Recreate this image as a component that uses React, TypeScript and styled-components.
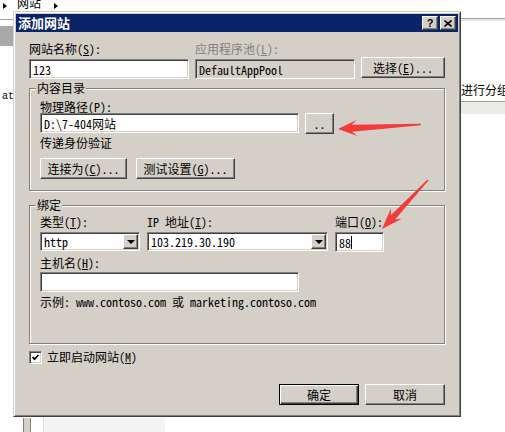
import React, { FC } from 'react';
import styled, { createGlobalStyle, css } from 'styled-components';

const FONT = `"Noto Sans Mono CJK SC", "Liberation Mono", "Noto Sans CJK SC", monospace`;
const FACE = '#d4d0c8';

const GlobalStyle = createGlobalStyle`
  html, body {
    margin: 0;
    padding: 0;
    background: #fff;
  }
  body {
    font-family: ${FONT};
    font-size: 12px;
    color: #000;
    overflow: hidden;
  }
`;

const sunken = css`
  box-sizing: border-box;
  border: 1px solid;
  border-color: #808080 #fff #fff #808080;
  box-shadow: inset 1px 1px #404040, inset -1px -1px ${FACE};
`;

const raised = css`
  box-sizing: border-box;
  border: 1px solid;
  border-color: #fff #404040 #404040 #fff;
  box-shadow: inset -1px -1px #808080, inset 1px 1px ${FACE};
  background: ${FACE};
`;

const Page = styled.div`
  position: relative;
  width: 505px;
  height: 432px;
  overflow: hidden;
  background: #fff;
`;

/* ---- the console behind the dialog ---- */

const Backdrop = styled.div`
  display: flex;
  flex-direction: column;
  height: 100%;
`;

const Crumbs = styled.div`
  height: 18px;
  display: flex;
  align-items: flex-start;
  padding-left: 3px;
`;

const CrumbArrow = styled.span<{ $gap: number }>`
  width: 0;
  height: 0;
  margin: 3px 0 0 ${(p) => p.$gap}px;
  border-left: 4px solid #000;
  border-top: 3px solid transparent;
  border-bottom: 3px solid transparent;
`;

const CrumbText = styled.span`
  margin: -4px 0 0 10px;
  line-height: 14px;
`;

const Panes = styled.div`
  flex: 1;
  display: flex;
  justify-content: space-between;
`;

const LeftPane = styled.div`
  width: 13px;
  margin-top: 1px;
  border-top: 1px solid #a0a0a0;
  display: flex;
  flex-direction: column;
  overflow: hidden;
`;

const HeaderBand = styled.div`
  margin-top: 6px;
  height: 20px;
  background: #a9a9a9;
`;

const StrayText = styled.div`
  margin-top: 45px;
  padding-left: 2px;
  font-family: 'Liberation Mono', monospace;
  font-size: 10px;
  line-height: 12px;
`;

const RightPane = styled.div`
  width: 44px;
  border-top: 1px solid #a0a0a0;
  display: flex;
  flex-direction: column;
  overflow: hidden;
`;

const PaneShade = styled.div`
  height: 2px;
  background: #e6e5e1;
`;

const PaneText = styled.div`
  margin-top: 62px;
  line-height: 14px;
  white-space: nowrap;
`;

const PaneBand = styled.div`
  margin-top: 4px;
  height: 12px;
  border-top: 1px solid #a0a0a0;
  background: #ecebe7;
`;

const Footer = styled.div`
  height: 14px;
  display: flex;
`;

const Splitter = styled.div`
  margin-left: 23px;
  width: 8px;
  box-sizing: border-box;
  border-left: 1px solid #808080;
  border-right: 1px solid #808080;
  background: ${FACE};
`;

const ListStub = styled.div`
  margin-left: 12px;
  width: 121px;
  background: #f4f4f4;
  border-left: 1px solid #dedede;
`;

/* ---- the dialog ---- */

const Window = styled.div`
  position: absolute;
  left: 13px;
  top: 11px;
  width: 448px;
  height: 406px;
  box-sizing: border-box;
  padding: 2px;
  background: ${FACE};
  border: 1px solid;
  border-color: ${FACE} #404040 #404040 ${FACE};
  box-shadow: inset 1px 1px #fff, inset -1px -1px #808080;
  display: flex;
  flex-direction: column;
`;

const TitleBar = styled.div`
  height: 18px;
  flex-shrink: 0;
  display: flex;
  align-items: center;
  justify-content: space-between;
  padding: 0 2px;
  background: #0a246a;
`;

const Title = styled.span`
  color: #fff;
  font-family: 'Noto Sans CJK SC', sans-serif;
  font-weight: 700;
  font-size: 13px;
  line-height: 16px;
`;

const CaptionButtons = styled.div`
  display: flex;
  gap: 2px;
`;

const CaptionButton = styled.div`
  ${raised}
  width: 16px;
  height: 14px;
  display: flex;
  align-items: center;
  justify-content: center;
  font-family: 'Liberation Sans', sans-serif;
  font-weight: 700;
  font-size: 11px;
  line-height: 12px;
`;

const Body = styled.div`
  display: flex;
  flex-direction: column;
  padding: 10px 13px 0;
`;

const TopGrid = styled.div`
  display: grid;
  grid-template-columns: 160px 160px 1fr;
  column-gap: 6px;
  row-gap: 3px;
  align-items: start;
`;

const Label = styled.div<{ $muted?: boolean; $mt?: number }>`
  line-height: 14px;
  white-space: nowrap;
  margin-top: ${(p) => p.$mt ?? 0}px;
  color: ${(p) => (p.$muted ? '#808080' : '#000')};
`;

const Field = styled.div<{ $w?: number; $h?: number; $disabled?: boolean; $mt?: number }>`
  ${sunken}
  width: ${(p) => (p.$w ? `${p.$w}px` : 'auto')};
  height: ${(p) => p.$h ?? 20}px;
  margin-top: ${(p) => p.$mt ?? 0}px;
  display: flex;
  align-items: center;
  padding-left: 3px;
  white-space: nowrap;
  overflow: hidden;
  background: ${(p) => (p.$disabled ? FACE : '#fff')};
`;

const Caret = styled.span`
  display: inline-block;
  width: 1px;
  height: 13px;
  background: #000;
`;

const Button = styled.div<{ $w?: number; $default?: boolean; $mt?: number }>`
  ${raised}
  width: ${(p) => (p.$w ? `${p.$w}px` : 'auto')};
  height: 21px;
  margin-top: ${(p) => p.$mt ?? 0}px;
  display: flex;
  align-items: center;
  justify-content: center;
  white-space: nowrap;
  ${(p) =>
    p.$default &&
    css`
      border-color: #000;
      box-shadow: inset 1px 1px #fff, inset -1px -1px #404040, inset -2px -2px #808080;
    `}
`;

const Group = styled.div<{ $mt: number; $pb: number }>`
  display: flex;
  flex-direction: column;
  margin-top: ${(p) => p.$mt}px;
  padding: 0 10px ${(p) => p.$pb}px;
  border: 1px solid #808080;
  box-shadow: inset 1px 1px #fff, 1px 1px #fff;
`;

const GroupTitle = styled.div`
  align-self: flex-start;
  margin: -8px 0 0 -4px;
  padding: 0 1px;
  line-height: 14px;
  background: ${FACE};
`;

const Row = styled.div<{ $gap: number; $mt?: number }>`
  display: flex;
  align-items: flex-start;
  gap: ${(p) => p.$gap}px;
  margin-top: ${(p) => p.$mt ?? 0}px;
`;

const BindGrid = styled.div`
  display: grid;
  grid-template-columns: 100px 181px 49px;
  column-gap: 7px;
  row-gap: 3px;
  margin-top: 3px;
  align-items: start;
`;

const Combo = styled.div`
  ${sunken}
  height: 19px;
  display: flex;
  align-items: center;
  justify-content: space-between;
  padding: 0 1px 0 3px;
  background: #fff;
`;

const DropButton = styled.div`
  ${raised}
  width: 15px;
  height: 15px;
  display: flex;
  align-items: center;
  justify-content: center;

  &::after {
    content: '';
    width: 0;
    height: 0;
    margin-top: 1px;
    border-top: 4px solid #000;
    border-left: 4px solid transparent;
    border-right: 4px solid transparent;
  }
`;

const CheckRow = styled.div`
  display: flex;
  align-items: center;
  gap: 5px;
  margin-top: 6px;
  line-height: 14px;
`;

const CheckBox = styled.div`
  ${sunken}
  width: 13px;
  height: 13px;
  background: #fff;
  display: flex;
  align-items: center;
  justify-content: center;
`;

const Actions = styled.div`
  display: flex;
  justify-content: flex-end;
  gap: 6px;
  margin-top: 20px;
`;

const Overlay = styled.svg`
  position: absolute;
  left: 0;
  top: 0;
  pointer-events: none;
`;

const Key: FC<{ k: string }> = ({ k }) => (
  <>
    (<u>{k}</u>)
  </>
);

type Pt = [number, number];

const arrowPoints = (tail: Pt, tip: Pt, head: number, barb: number, neck: number, end: number) => {
  const dx = tip[0] - tail[0];
  const dy = tip[1] - tail[1];
  const len = Math.hypot(dx, dy);
  const ux = dx / len;
  const uy = dy / len;
  const px = -uy;
  const py = ux;
  const nx = tip[0] - ux * head;
  const ny = tip[1] - uy * head;
  const pts: Pt[] = [
    tip,
    [nx + px * barb - ux * 2, ny + py * barb - uy * 2],
    [nx + px * neck + ux * 3, ny + py * neck + uy * 3],
    [tail[0] + px * end, tail[1] + py * end],
    [tail[0] - px * end, tail[1] - py * end],
    [nx - px * neck + ux * 3, ny - py * neck + uy * 3],
    [nx - px * barb - ux * 2, ny - py * barb - uy * 2],
  ];
  return pts.map((p) => p.map((v) => v.toFixed(1)).join(',')).join(' ');
};

const App: FC = () => (
  <Page>
    <GlobalStyle />
    <Backdrop>
      <Crumbs>
        <CrumbArrow $gap={0} />
        <CrumbText>网站</CrumbText>
        <CrumbArrow $gap={13} />
      </Crumbs>
      <Panes>
        <LeftPane>
          <HeaderBand />
          <StrayText>at</StrayText>
        </LeftPane>
        <RightPane>
          <PaneShade />
          <PaneText>进行分组</PaneText>
          <PaneBand />
        </RightPane>
      </Panes>
      <Footer>
        <Splitter />
        <ListStub />
      </Footer>
    </Backdrop>

    <Window>
      <TitleBar>
        <Title>添加网站</Title>
        <CaptionButtons>
          <CaptionButton>?</CaptionButton>
          <CaptionButton>
            <svg width="8" height="7" viewBox="0 0 8 7">
              <path d="M0.5 0.5 L7.5 6.5 M7.5 0.5 L0.5 6.5" stroke="#000" strokeWidth="1.6" />
            </svg>
          </CaptionButton>
        </CaptionButtons>
      </TitleBar>

      <Body>
        <TopGrid>
          <Label>
            网站名称<Key k="S" />:
          </Label>
          <Label $muted>
            应用程序池<Key k="L" />:
          </Label>
          <span />
          <Field>123</Field>
          <Field $disabled>DefaultAppPool</Field>
          <Button $mt={-2}>
            选择<Key k="E" />...
          </Button>
        </TopGrid>

        <Group $mt={9} $pb={11}>
          <GroupTitle>内容目录</GroupTitle>
          <Label $mt={5}>
            物理路径<Key k="P" />:
          </Label>
          <Row $gap={6} $mt={-1}>
            <Field $w={259}>D:\7-404网站</Field>
            <Button $w={29}>..</Button>
          </Row>
          <Label $mt={2}>传递身份验证</Label>
          <Row $gap={9} $mt={8}>
            <Button $w={87}>
              连接为<Key k="C" />...
            </Button>
            <Button $w={99}>
              测试设置<Key k="G" />...
            </Button>
          </Row>
        </Group>

        <Group $mt={14} $pb={34}>
          <GroupTitle>绑定</GroupTitle>
          <BindGrid>
            <Label>
              类型<Key k="T" />:
            </Label>
            <Label>
              IP 地址<Key k="I" />:
            </Label>
            <Label>
              端口<Key k="O" />:
            </Label>
            <Combo>
              http
              <DropButton />
            </Combo>
            <Combo>
              103.219.30.190
              <DropButton />
            </Combo>
            <Field>
              88
              <Caret />
            </Field>
          </BindGrid>
          <Label $mt={4}>
            主机名<Key k="H" />:
          </Label>
          <Field $w={259} $mt={2} />
          <Label $mt={3}>示例: www.contoso.com 或 marketing.contoso.com</Label>
        </Group>

        <CheckRow>
          <CheckBox>
            <svg width="9" height="9" viewBox="0 0 9 9">
              <polyline points="1.5,4 3.5,6.2 7.5,2" fill="none" stroke="#000" strokeWidth="1.8" />
            </svg>
          </CheckBox>
          <span>
            立即启动网站<Key k="M" />
          </span>
        </CheckRow>

        <Actions>
          <Button $w={80} $default>
            确定
          </Button>
          <Button $w={80}>取消</Button>
        </Actions>
      </Body>
    </Window>

    <Overlay width="505" height="432" viewBox="0 0 505 432">
      <polygon points={arrowPoints([421, 124.5], [338, 129], 17, 8, 3.5, 0.7)} fill="#f43b3b" />
      <polygon points={arrowPoints([428, 180], [382, 229], 19, 7.5, 3, 0.7)} fill="#f43b3b" />
    </Overlay>
  </Page>
);

export default App;
